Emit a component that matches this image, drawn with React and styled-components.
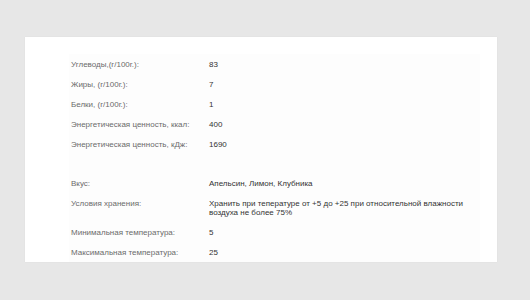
import React from "react";
import styled, { createGlobalStyle } from "styled-components";

const Global = createGlobalStyle`
  html, body { margin: 0; padding: 0; background: #e7e7e7; }
  body { font-family: "Liberation Sans", Arial, sans-serif; }
`;

const Page = styled.div`
  padding: 37px 0 0 25px;
  height: 300px;
  box-sizing: border-box;
`;

const Card = styled.div`
  width: 472px;
  height: 225px;
  background: #ffffff;
  box-shadow: 0 0 1px rgba(0,0,0,0.08);
  padding: 17px 17px 0 44px;
  box-sizing: border-box;
  overflow: hidden;
`;

const Table = styled.div`
  background: #fdfdfd;
  display: grid;
  grid-template-columns: 138px 1fr;
`;

const Cell = styled.div`
  padding: 6px 0 5px 2px;
  font-size: 8px;
  line-height: 9px;
  color: ${(p) => (p.$value ? "#333333" : "#6b6b6b")};
`;

const Spacer = styled.div`
  grid-column: 1 / -1;
  height: 19px;
`;

const groups = [
  [
    ["Углеводы,(г/100г.):", "83"],
    ["Жиры, (г/100г.):", "7"],
    ["Белки, (г/100г.):", "1"],
    ["Энергетическая ценность, ккал:", "400"],
    ["Энергетическая ценность, кДж:", "1690"],
  ],
  [
    ["Вкус:", "Апельсин, Лимон, Клубника"],
    ["Условия хранения:", "Хранить при тепературе от +5 до +25 при относительной влажности воздуха не более 75%"],
    ["Минимальная температура:", "5"],
    ["Максимальная температура:", "25"],
  ],
];

export default function App() {
  return (
    <>
      <Global />
      <Page>
        <Card>
          <Table>
            {groups.map((g, gi) => (
              <React.Fragment key={gi}>
                {gi > 0 && <Spacer />}
                {g.map(([l, v]) => (
                  <React.Fragment key={l}>
                    <Cell>{l}</Cell>
                    <Cell $value>{v}</Cell>
                  </React.Fragment>
                ))}
              </React.Fragment>
            ))}
          </Table>
        </Card>
      </Page>
    </>
  );
}
